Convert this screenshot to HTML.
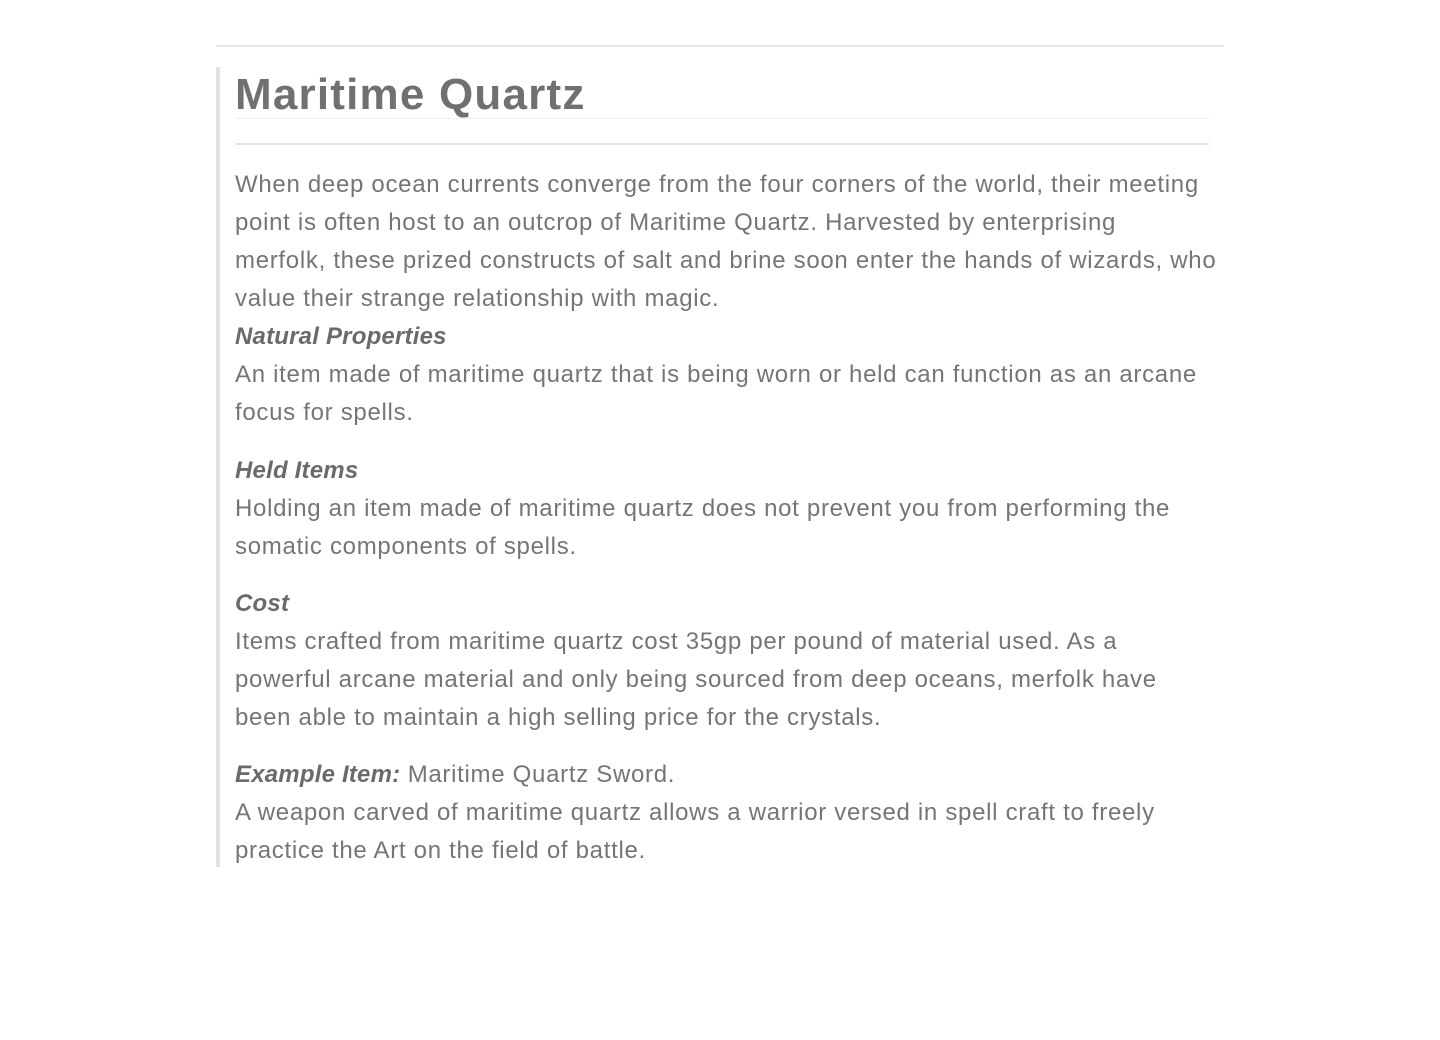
<!DOCTYPE html>
<html><head><meta charset="utf-8"><style>
html,body{margin:0;padding:0;background:#fff;width:1440px;height:1040px;overflow:hidden}
body{font-family:"Liberation Sans",sans-serif;color:#757575;position:relative}
.hr0{position:absolute;left:216px;top:45px;width:1008px;height:2px;background:#e6e6e6}
.bar{position:absolute;left:216px;top:67px;width:4px;height:800px;background:#e2e2e2}
h1{position:absolute;left:235px;top:67px;margin:0;font-size:44px;line-height:56px;font-weight:bold;color:#707070;letter-spacing:1.2px}
.l1{position:absolute;left:235px;top:118px;width:974px;height:1px;background:#efefef}
.l2{position:absolute;left:235px;top:143px;width:974px;height:2px;background:#e4e4e4}
.t{position:absolute;left:235px;font-size:24px;line-height:38px;white-space:nowrap;letter-spacing:0.7px}
.b{font-weight:bold;font-style:italic;color:#6a6a6a;letter-spacing:0.2px}
</style></head><body>
<div class="hr0"></div><div class="bar"></div>
<h1>Maritime Quartz</h1>
<div class="l1"></div><div class="l2"></div>
<div class="t" style="top:166px">When deep ocean currents converge from the four corners of the world, their meeting</div>
<div class="t" style="top:204px">point is often host to an outcrop of Maritime Quartz. Harvested by enterprising</div>
<div class="t" style="top:242px">merfolk, these prized constructs of salt and brine soon enter the hands of wizards, who</div>
<div class="t" style="top:280px">value their strange relationship with magic.</div>
<div class="t b" style="top:318px">Natural Properties</div>
<div class="t" style="top:356px">An item made of maritime quartz that is being worn or held can function as an arcane</div>
<div class="t" style="top:394px">focus for spells.</div>
<div class="t b" style="top:452px">Held Items</div>
<div class="t" style="top:490px">Holding an item made of maritime quartz does not prevent you from performing the</div>
<div class="t" style="top:528px">somatic components of spells.</div>
<div class="t b" style="top:585px">Cost</div>
<div class="t" style="top:623px">Items crafted from maritime quartz cost 35gp per pound of material used. As a</div>
<div class="t" style="top:661px">powerful arcane material and only being sourced from deep oceans, merfolk have</div>
<div class="t" style="top:699px">been able to maintain a high selling price for the crystals.</div>
<div class="t" style="top:756px"><span class="b">Example Item:</span> Maritime Quartz Sword.</div>
<div class="t" style="top:794px">A weapon carved of maritime quartz allows a warrior versed in spell craft to freely</div>
<div class="t" style="top:832px">practice the Art on the field of battle.</div>
</body></html>
